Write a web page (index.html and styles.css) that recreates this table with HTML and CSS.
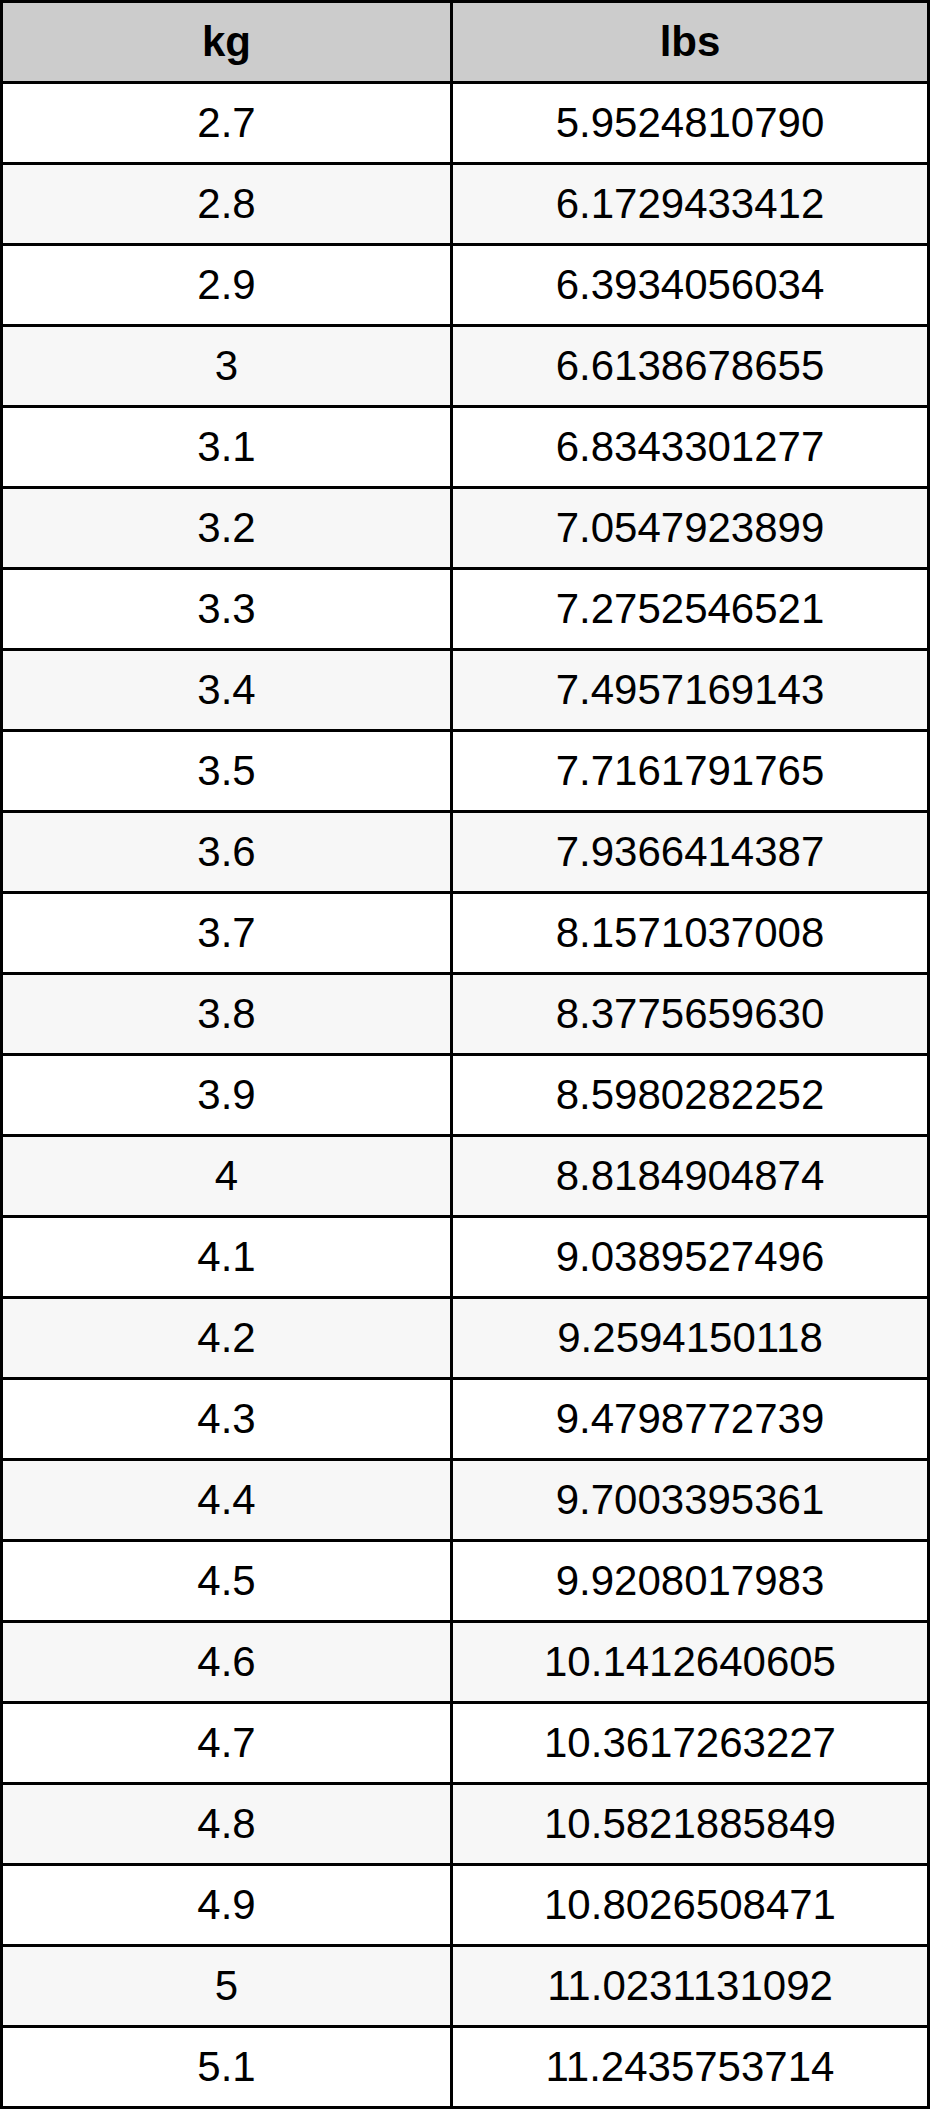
FILE: index.html
```html
<!DOCTYPE html>
<html lang="en">
<head>
<meta charset="utf-8">
<title>kg to lbs</title>
<link rel="stylesheet" href="styles.css">
</head>
<body>
<table class="conv">
  <thead>
    <tr><th class="c1">kg</th><th class="c2">lbs</th></tr>
  </thead>
  <tbody>
    <tr><td class="c1">2.7</td><td class="c2">5.9524810790</td></tr>
    <tr><td class="c1">2.8</td><td class="c2">6.1729433412</td></tr>
    <tr><td class="c1">2.9</td><td class="c2">6.3934056034</td></tr>
    <tr><td class="c1">3</td><td class="c2">6.6138678655</td></tr>
    <tr><td class="c1">3.1</td><td class="c2">6.8343301277</td></tr>
    <tr><td class="c1">3.2</td><td class="c2">7.0547923899</td></tr>
    <tr><td class="c1">3.3</td><td class="c2">7.2752546521</td></tr>
    <tr><td class="c1">3.4</td><td class="c2">7.4957169143</td></tr>
    <tr><td class="c1">3.5</td><td class="c2">7.7161791765</td></tr>
    <tr><td class="c1">3.6</td><td class="c2">7.9366414387</td></tr>
    <tr><td class="c1">3.7</td><td class="c2">8.1571037008</td></tr>
    <tr><td class="c1">3.8</td><td class="c2">8.3775659630</td></tr>
    <tr><td class="c1">3.9</td><td class="c2">8.5980282252</td></tr>
    <tr><td class="c1">4</td><td class="c2">8.8184904874</td></tr>
    <tr><td class="c1">4.1</td><td class="c2">9.0389527496</td></tr>
    <tr><td class="c1">4.2</td><td class="c2">9.2594150118</td></tr>
    <tr><td class="c1">4.3</td><td class="c2">9.4798772739</td></tr>
    <tr><td class="c1">4.4</td><td class="c2">9.7003395361</td></tr>
    <tr><td class="c1">4.5</td><td class="c2">9.9208017983</td></tr>
    <tr><td class="c1">4.6</td><td class="c2">10.1412640605</td></tr>
    <tr><td class="c1">4.7</td><td class="c2">10.3617263227</td></tr>
    <tr><td class="c1">4.8</td><td class="c2">10.5821885849</td></tr>
    <tr><td class="c1">4.9</td><td class="c2">10.8026508471</td></tr>
    <tr><td class="c1">5</td><td class="c2">11.0231131092</td></tr>
    <tr><td class="c1">5.1</td><td class="c2">11.2435753714</td></tr>
  </tbody>
</table>
</body>
</html>
```
FILE: styles.css
```css
html, body {
  margin: 0;
  padding: 0;
  background: #ffffff;
}

.conv {
  width: 930px;
  table-layout: fixed;
  border-collapse: separate;
  border-spacing: 0;
  border: 3px solid #000000;
  font-family: "Liberation Sans", Arial, sans-serif;
  font-size: 42px;
  color: #000000;
}

.conv th,
.conv td {
  height: 78px;
  padding: 0;
  text-align: center;
  vertical-align: middle;
  border-bottom: 3px solid #000000;
  line-height: 1;
}

.conv tbody tr:last-child td {
  border-bottom: none;
}

.conv .c1 {
  width: 447px;
  border-right: 3px solid #000000;
}

.conv .c2 {
  width: 474px;
}

.conv th {
  background: #cccccc;
  font-weight: bold;
}

.conv tbody tr:nth-child(odd) td {
  background: #ffffff;
}

.conv tbody tr:nth-child(even) td {
  background: #f7f7f7;
}
```
